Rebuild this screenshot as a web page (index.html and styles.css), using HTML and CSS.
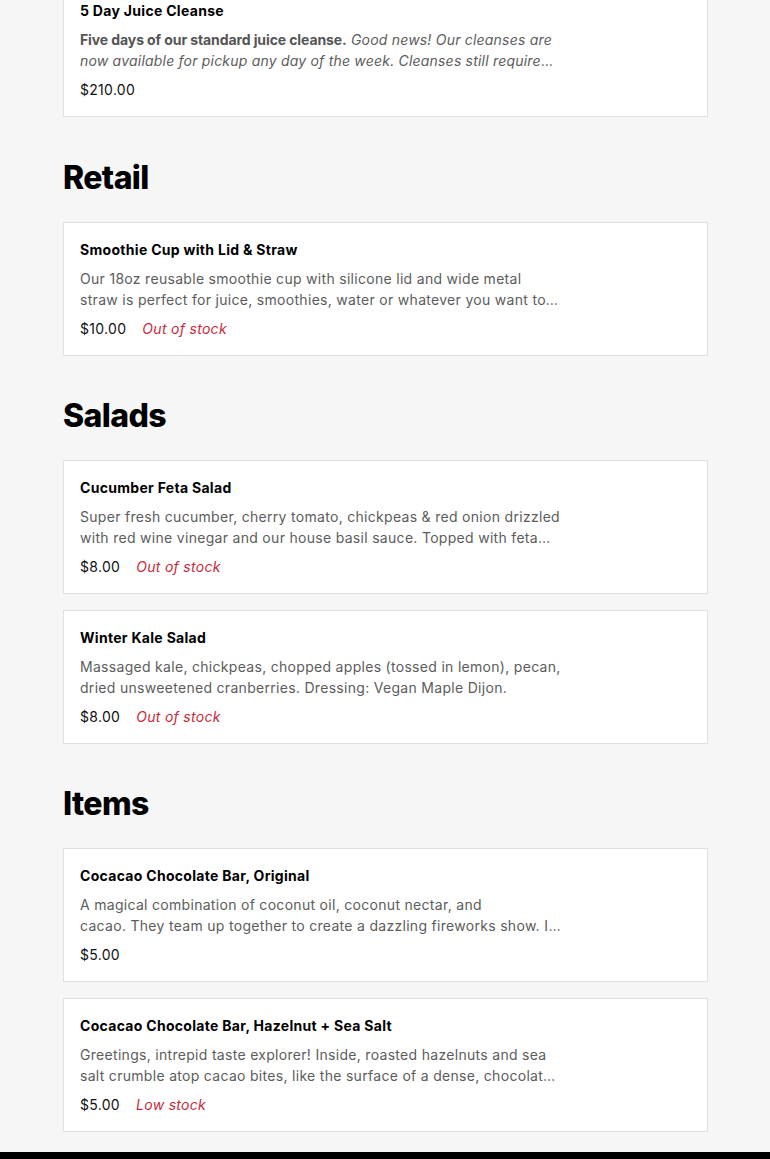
FILE: index.html
```html
<!DOCTYPE html>
<html lang="en">
<head>
<meta charset="utf-8">
<title>Menu</title>
<link rel="stylesheet" href="styles.css">
</head>
<body>
<main class="menu">
  <section class="category category-first">
    <article class="item">
      <h3 class="item-title">5 Day Juice Cleanse</h3>
      <p class="item-desc"><strong>Five days of our standard juice cleanse.</strong> <em>Good news! Our cleanses are now available for pickup any day of the week. Cleanses still require 24 hours notice before pickup.</em></p>
      <div class="item-meta"><span class="price">$210.00</span></div>
    </article>
  </section>

  <section class="category">
    <h2 class="category-title">Retail</h2>
    <article class="item">
      <h3 class="item-title">Smoothie Cup with Lid &amp; Straw</h3>
      <p class="item-desc">Our 18oz reusable smoothie cup with silicone lid and wide metal straw is perfect for juice, smoothies, water or whatever you want to bring along with you.</p>
      <div class="item-meta"><span class="price">$10.00</span><span class="stock">Out of stock</span></div>
    </article>
  </section>

  <section class="category">
    <h2 class="category-title">Salads</h2>
    <article class="item">
      <h3 class="item-title">Cucumber Feta Salad</h3>
      <p class="item-desc">Super fresh cucumber, cherry tomato, chickpeas &amp; red onion drizzled with red wine vinegar and our house basil sauce. Topped with feta cheese.</p>
      <div class="item-meta"><span class="price">$8.00</span><span class="stock">Out of stock</span></div>
    </article>
    <article class="item">
      <h3 class="item-title">Winter Kale Salad</h3>
      <p class="item-desc">Massaged kale, chickpeas, chopped apples (tossed in lemon), pecan, dried unsweetened cranberries. Dressing: Vegan Maple Dijon.</p>
      <div class="item-meta"><span class="price">$8.00</span><span class="stock">Out of stock</span></div>
    </article>
  </section>

  <section class="category">
    <h2 class="category-title">Items</h2>
    <article class="item">
      <h3 class="item-title">Cocacao Chocolate Bar, Original</h3>
      <p class="item-desc">A magical combination of coconut oil, coconut nectar, and<br>cacao. They team up together to create a dazzling fireworks show. It melts in your mouth.</p>
      <div class="item-meta"><span class="price">$5.00</span></div>
    </article>
    <article class="item">
      <h3 class="item-title">Cocacao Chocolate Bar, Hazelnut + Sea Salt</h3>
      <p class="item-desc">Greetings, intrepid taste explorer! Inside, roasted hazelnuts and sea salt crumble atop cacao bites, like the surface of a dense, chocolate planet.</p>
      <div class="item-meta"><span class="price">$5.00</span><span class="stock">Low stock</span></div>
    </article>
  </section>
</main>
<footer class="site-footer"></footer>
</body>
</html>
```
FILE: styles.css
```css
* { box-sizing: border-box; }
html, body { margin: 0; padding: 0; }
body {
  background: #f6f6f6;
  font-family: Inter, "Open Sans", "Liberation Sans", sans-serif;
  color: #111;
}
.menu {
  width: 645px;
  margin: -16px 0 0 63px;
  padding-bottom: 20px;
}
.category {
  display: flex;
  flex-direction: column;
  gap: 16px;
}
.category-first { margin-bottom: 1px; }
.category-title {
  margin: 40px 0 8px;
  font-size: 32px;
  line-height: 40px;
  font-weight: 800;
  color: #000;
  letter-spacing: -0.6px;
}
.item {
  background: #fff;
  border: 1px solid #e0e0e0;
  padding: 17px 16px 16px;
  display: flex;
  flex-direction: column;
  gap: 8px;
}
.category-first .item { padding-top: 16px; }
.item-title {
  margin: 0;
  font-size: 14px;
  line-height: 20px;
  font-weight: 700;
  color: #000;
  letter-spacing: 0.3px;
}
.item-desc {
  margin: 0 0 1px;
  max-width: 482px;
  font-size: 14px;
  line-height: 21px;
  color: #5c5c5c;
  letter-spacing: 0.3px;
  display: -webkit-box;
  -webkit-line-clamp: 2;
  -webkit-box-orient: vertical;
  overflow: hidden;
}
.item-desc strong { font-weight: 700; color: #555; letter-spacing: -0.1px; }
.item-desc em { font-style: italic; letter-spacing: 0.2px; }
.item-meta {
  display: flex;
  gap: 16px;
  font-size: 14px;
  line-height: 20px;
  letter-spacing: 0.3px;
}
.price { color: #111; }
.stock { color: #c8293b; font-style: italic; }
.site-footer {
  height: 40px;
  background: #000;
}
```
